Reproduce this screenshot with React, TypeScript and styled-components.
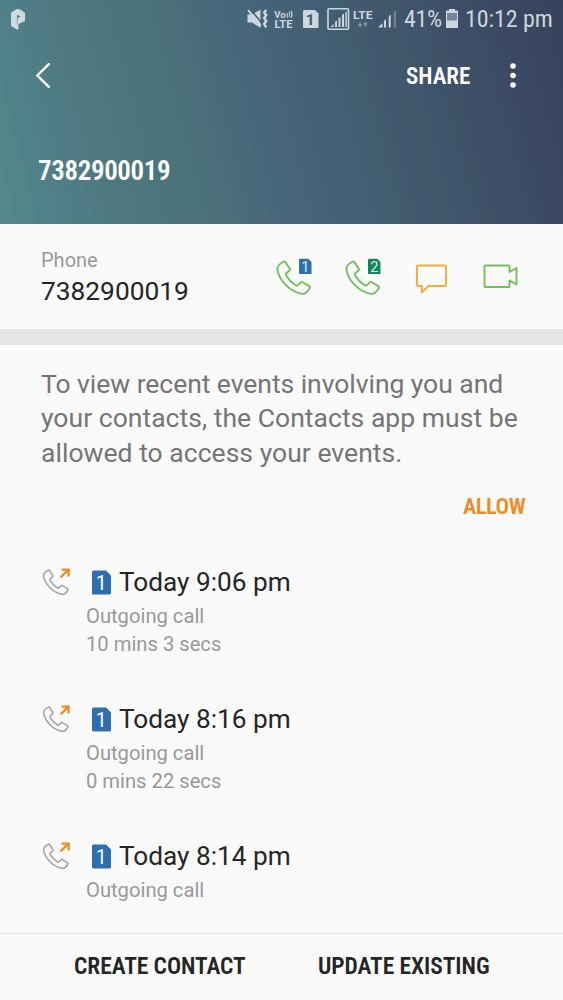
import React from "react";
import styled, { createGlobalStyle } from "styled-components";

const GlobalStyle = createGlobalStyle`
  * { box-sizing: border-box; }
  body { margin: 0; background: #fafafa; font-family: Roboto, "Liberation Sans", sans-serif; }
`;

const Screen = styled.main`
  width: 563px;
  height: 1000px;
  display: flex;
  flex-direction: column;
  background: #fafafa;
  overflow: hidden;
`;

const Header = styled.header`
  height: 224px;
  flex: none;
  display: flex;
  flex-direction: column;
  background: linear-gradient(75deg, #548988 0%, #50808a 9%, #4e7880 20%, #4b717a 34%, #47687b 45%, #425c70 64%, #3d4f66 82%, #37415b 100%);
`;

const StatusBar = styled.div`
  height: 38px;
  display: flex;
  align-items: center;
  justify-content: space-between;
  padding: 0 11px 0 10px;
  color: #ccd6de;
`;

const StatusGroup = styled.div`
  display: flex;
  align-items: center;
  height: 38px;
`;

const Condensed = styled.span<{ $size: number; $width: number; $weight?: number; $spacing?: number }>`
  display: block;
  width: ${(p) => p.$width}px;
  font-size: ${(p) => p.$size}px;
  font-weight: ${(p) => p.$weight ?? 400};
  font-family: Roboto, "Liberation Sans", sans-serif;
  font-stretch: 75%;
  letter-spacing: ${(p) => p.$spacing ?? 0}px;
  white-space: nowrap;
`;

const Toolbar = styled.div`
  height: 75px;
  display: flex;
  align-items: center;
  padding: 0 44px 0 35px;
  color: #fff;
`;

const ShareButton = styled.div`
  padding-top: 2px;
`;

const Spacer = styled.div`
  flex: 1;
`;

const MoreButton = styled.div`
  display: flex;
  margin-left: 36px;
`;

const Title = styled.div`
  padding: 42px 0 0 38px;
  color: #fff;
  line-height: 32px;
`;

const PhoneRow = styled.section`
  height: 105px;
  flex: none;
  display: flex;
  justify-content: space-between;
  padding: 20px 42px 0 41px;
`;

const PhoneLabel = styled.div`
  padding-top: 1px;
  font-size: 20px;
  line-height: 30px;
  color: #999;
`;

const PhoneNumber = styled.div`
  font-size: 26.3px;
  line-height: 33px;
  color: #252525;
`;

const Actions = styled.div`
  display: flex;
  gap: 31px;
  padding-top: 13px;
`;

const Divider = styled.div`
  height: 16px;
  flex: none;
  background: #e6e6e6;
`;

const Notice = styled.section`
  padding: 22px 38px 0 41px;
`;

const NoticeLine = styled.div<{ $spacing?: number }>`
  font-size: 26.5px;
  line-height: 34.4px;
  letter-spacing: ${(p) => p.$spacing ?? 0}px;
  color: #757575;
  white-space: nowrap;
`;

const AllowRow = styled.div`
  display: flex;
  justify-content: flex-end;
  margin: 21px 0 1px;
  line-height: 30px;
  color: #f08a24;
`;

const History = styled.section`
  flex: 1;
  min-height: 0;
  padding: 43px 0 0 42px;
  overflow: hidden;
`;

const Entry = styled.article`
  height: 137px;
  display: flex;
`;

const EntryBody = styled.div`
  margin-left: 14px;
`;

const EntryTitle = styled.div`
  display: flex;
  align-items: center;
  gap: 8px;
  padding-left: 6px;
  height: 34px;
  margin-bottom: 3px;
  font-size: 26.2px;
  color: #252525;
  white-space: nowrap;
`;

const EntryDetail = styled.div`
  font-size: 20.2px;
  line-height: 28px;
  color: #999;
`;

const Footer = styled.footer`
  height: 67px;
  flex: none;
  display: flex;
  align-items: center;
  gap: 72px;
  padding: 0 0 2px 74px;
  border-top: 1px solid #e4e4e4;
  color: #252525;
`;

const HANDSET =
  "M7.2 1.6C8 1 8.9 1.1 9.4 2L13.7 8.6C14.2 9.4 14 10 13.4 10.5L10.2 13.2C9.6 13.8 9.6 14.4 10 15.2C12.4 19.5 15.8 23 20.2 25.4C21 25.8 21.6 25.6 22.2 25L24.8 22.4C25.4 21.8 26 21.7 26.8 22.2L33.4 26.2C34.3 26.8 34.4 27.6 33.9 28.4C32 31.6 29.6 34.4 26.4 34C14 32 3 20.5 1.2 9.5C.8 6.5 4 3.3 7.2 1.6Z";

const BadgeDigit = styled.text`
  font-family: Roboto, "Liberation Sans", sans-serif;
  font-stretch: 90%;
  text-anchor: middle;
`;

const CallAction = ({ sim, color }: { sim: number; color: string }) => (
  <svg width="38" height="40" viewBox="0 0 38 40">
    <path d={HANDSET} transform="translate(.2 3.2) scale(.99)" fill="none" stroke="#73c05b" strokeWidth="1.9" />
    <path d="M24 1.8h8.3l3.2 3.2v12H24a1 1 0 0 1-1-1V2.8a1 1 0 0 1 1-1z" fill={color} />
    <BadgeDigit x="29.3" y="14.7" fontSize="14.5" fill="#dcebf2">{sim}</BadgeDigit>
  </svg>
);

const MessageAction = () => (
  <svg width="38" height="40" viewBox="0 0 38 40">
    <path d="M4 8.5h27q1 0 1 1v18.5q0 1-1 1H14.5L7.8 35.5V29H4q-1 0-1-1V9.5q0-1 1-1z" fill="none" stroke="#f2ab3c" strokeWidth="1.9" strokeLinejoin="round" />
  </svg>
);

const VideoAction = () => (
  <svg width="38" height="40" viewBox="0 0 38 40">
    <path d="M2.5 8.5h23q1 0 1 1v5.5l7-4v16.5l-7-4v5.5q0 1-1 1h-23q-1 0-1-1V9.5q0-1 1-1z" fill="none" stroke="#73c05b" strokeWidth="1.9" strokeLinejoin="round" />
  </svg>
);

const OutgoingIcon = () => (
  <svg width="30" height="34" viewBox="0 0 30 34">
    <path d={HANDSET} transform="translate(.7 4.2) scale(.74)" fill="none" stroke="#a6a6a6" strokeWidth="2.2" />
    <path d="M18.6 12.4L26.3 4.7M19.6 4.6h7v7" fill="none" stroke="#f08a24" strokeWidth="2.3" />
  </svg>
);

const SimBadge = () => (
  <svg width="19" height="25" viewBox="0 0 19 25">
    <path d="M1.5 .5H14l5 5v17.5q0 1.500-1.500 1.500h-16Q0 24.500 0 23v-21Q0 .5 1.5 .5z" fill="#2f6fb0" />
    <BadgeDigit x="9.2" y="19.5" fontSize="19.5" fill="#fff">1</BadgeDigit>
  </svg>
);

const AppMark = () => (
  <svg width="17" height="24" viewBox="0 0 17 24">
    <path d="M1 6.5Q1 5.5 2 5L6.5 2.3Q8 1.6 9.5 2.3L14 5Q15 5.5 15 6.5V13Q15 14 14 14.5L8.5 17v5.2q-1 .6-2 0L2 19.5Q1 19 1 18z" fill="#cfdcdf" />
    <path d="M7.3 8.5v9" fill="none" stroke="#7a9da2" strokeWidth=".8" />
    <path d="M7.2 7.8l3.4 1.8-3.4 1.8z" fill="#56808a" />
  </svg>
);

const StatusIcons = () => (
  <svg width="158" height="38" viewBox="246 0 158 38" fill="#ccd6de">
    <path d="M247.5 14.5h4.5l8.5-5v18.5l-8.5-5.5h-4.5z" />
    <path d="M250 8.8l12 14.5" stroke="#466074" strokeWidth="1.5" />
    <path d="M248.2 10.2l12.5 15.5" stroke="#ccd6de" strokeWidth="2" />
    <path d="M266.2 10l-2 2.5 2 2.5-2 3 2 3-2 3 2 3.5" fill="none" stroke="#ccd6de" strokeWidth="2.5" />
    <g fontFamily="Roboto, sans-serif" fontWeight="700">
      <text x="274.3" y="17.8" fontSize="9.5" textLength="11.5" lengthAdjust="spacingAndGlyphs">Vo</text>
      <text x="274.5" y="28" fontSize="10.5" textLength="18" lengthAdjust="spacingAndGlyphs">LTE</text>
      <text x="353" y="18.7" fontSize="11.5" textLength="19.5" lengthAdjust="spacingAndGlyphs">LTE</text>
    </g>
    <path d="M287.2 13v4.8M289 12q1.2 2.5 0 5M291 10.8q2 3.5 0 7" fill="none" stroke="#ccd6de" strokeWidth="1.1" />
    <path d="M304.5 10H315l3.5 3.5V27q0 1-1 1h-13q-1.5 0-1.5-1V11q0-1 1.5-1z" />
    <text x="310.3" y="24.5" fontSize="15.5" fontWeight="700" fontFamily="Roboto, sans-serif" textAnchor="middle" fill="#42596d">1</text>
    <rect x="328" y="8.8" width="20.5" height="20.5" rx="1" fill="none" stroke="#ccd6de" strokeWidth="1.6" />
    <path d="M330.5 27l3-3v3zM335 22l2-1.5V27H335zM338.5 18.5l2-1.5v10h-2zM342 15l2-1.5V27H342zM345.3 12.5l1.5-1V27h-1.5z" />
    <path d="M360 22v4M358.2 24.5l1.8 2 1.8-2M365.5 27v-4M363.7 24.5l1.8-2 1.8 2" fill="none" stroke="#8294a4" strokeWidth="1.3" />
    <path d="M378 27.5l4.5-4.5v4.5zM384 21l2-2v8.5H384zM388.7 16.5l2-2v13h-2z" />
    <path d="M393.7 12l2.3-2v17.5h-2.3z" opacity=".35" />
  </svg>
);

const Battery = () => (
  <svg width="21" height="38" viewBox="0 0 21 38">
    <path d="M5 9h6v1.500h2.500q.5 0 .5 .5v17H2V11q0-.5 .5-.5H5z" fill="#ccd6de" />
    <path d="M3 13h10v7.5H3z" fill="#77869a" />
  </svg>
);

const calls = [
  { time: "Today 9:06 pm", duration: "10 mins 3 secs" },
  { time: "Today 8:16 pm", duration: "0 mins 22 secs" },
  { time: "Today 8:14 pm", duration: "" },
];

export default function App() {
  return (
    <Screen>
      <GlobalStyle />
      <Header>
        <StatusBar>
          <AppMark />
          <StatusGroup>
            <StatusIcons />
            <Condensed $size={24} $width={40} $spacing={-0.4}>41%</Condensed>
            <Battery />
            <Condensed $size={24} $width={87} $spacing={-0.1}>10:12 pm</Condensed>
          </StatusGroup>
        </StatusBar>
        <Toolbar>
          <svg width="18" height="26" viewBox="0 0 18 26">
            <path d="M13.8 1.2L2.3 12.5l11.5 11.3" fill="none" stroke="#fff" strokeWidth="2.4" strokeLinecap="round" />
          </svg>
          <Spacer />
          <ShareButton>
            <Condensed $size={23} $width={65} $weight={650}>SHARE</Condensed>
          </ShareButton>
          <MoreButton>
            <svg width="12" height="28" viewBox="0 0 12 28" fill="#fff">
              <circle cx="6" cy="4" r="2.8" />
              <circle cx="6" cy="13.5" r="2.8" />
              <circle cx="6" cy="23" r="2.8" />
            </svg>
          </MoreButton>
        </Toolbar>
        <Title>
          <Condensed $size={27} $width={133} $weight={570} $spacing={-0.35}>7382900019</Condensed>
        </Title>
      </Header>
      <PhoneRow>
        <div>
          <PhoneLabel>Phone</PhoneLabel>
          <PhoneNumber>7382900019</PhoneNumber>
        </div>
        <Actions>
          <CallAction sim={1} color="#2f6fb0" />
          <CallAction sim={2} color="#11875c" />
          <MessageAction />
          <VideoAction />
        </Actions>
      </PhoneRow>
      <Divider />
      <Notice>
        <NoticeLine $spacing={-0.05}>To view recent events involving you and</NoticeLine>
        <NoticeLine $spacing={0.03}>your contacts, the Contacts app must be</NoticeLine>
        <NoticeLine $spacing={0.03}>allowed to access your events.</NoticeLine>
        <AllowRow>
          <Condensed $size={22.5} $width={62} $weight={600} $spacing={-0.5}>ALLOW</Condensed>
        </AllowRow>
      </Notice>
      <History>
        {calls.map((call) => (
          <Entry key={call.time}>
            <OutgoingIcon />
            <EntryBody>
              <EntryTitle>
                <SimBadge />
                <span>{call.time}</span>
              </EntryTitle>
              <EntryDetail>Outgoing call</EntryDetail>
              <EntryDetail>{call.duration}</EntryDetail>
            </EntryBody>
          </Entry>
        ))}
      </History>
      <Footer>
        <Condensed $size={23.5} $width={172} $weight={650} $spacing={-0.05}>CREATE CONTACT</Condensed>
        <Condensed $size={23.5} $width={173} $weight={650} $spacing={-0.05}>UPDATE EXISTING</Condensed>
      </Footer>
    </Screen>
  );
}
